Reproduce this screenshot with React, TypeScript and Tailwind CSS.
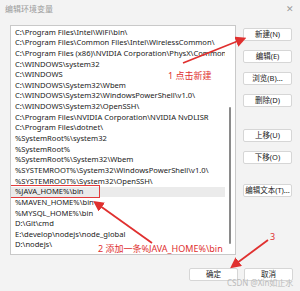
const paths = [
  'C:\\Program Files\\Intel\\WiFi\\bin\\',
  'C:\\Program Files\\Common Files\\Intel\\WirelessCommon\\',
  'C:\\Program Files (x86)\\NVIDIA Corporation\\PhysX\\Common',
  'C:\\WINDOWS\\system32',
  'C:\\WINDOWS',
  'C:\\WINDOWS\\System32\\Wbem',
  'C:\\WINDOWS\\System32\\WindowsPowerShell\\v1.0\\',
  'C:\\WINDOWS\\System32\\OpenSSH\\',
  'C:\\Program Files\\NVIDIA Corporation\\NVIDIA NvDLISR',
  'C:\\Program Files\\dotnet\\',
  '%SystemRoot%\\system32',
  '%SystemRoot%',
  '%SystemRoot%\\System32\\Wbem',
  '%SYSTEMROOT%\\System32\\WindowsPowerShell\\v1.0\\',
  '%SYSTEMROOT%\\System32\\OpenSSH\\',
  '%JAVA_HOME%\\bin',
  '%MAVEN_HOME%\\bin',
  '%MYSQL_HOME%\\bin',
  'D:\\Git\\cmd',
  'E:\\develop\\nodejs\\node_global',
  'D:\\nodejs\\',
];

const sideButtons = [
  { label: '新建(N)', mt: 'mt-[3px]' },
  { label: '编辑(E)', mt: 'mt-[9px]' },
  { label: '浏览(B)...', mt: 'mt-[9px]' },
  { label: '删除(D)', mt: 'mt-[9px]' },
  { label: '上移(U)', mt: 'mt-[22px]' },
  { label: '下移(O)', mt: 'mt-[9px]' },
  { label: '编辑文本(T)...', mt: 'mt-[20px]' },
];

const Btn = ({ label, className = '' }: { label: string; className?: string }) => (
  <div
    className={`h-[13px] w-[49px] flex items-center justify-center bg-white border border-[#d6d6d6] rounded-[2px] text-[7.5px] text-[#222] ${className}`}
  >
    {label}
  </div>
);

export default function App() {
  return (
    <div
      className="relative w-[300px] h-[291px] overflow-hidden bg-[#f3f3f3]"
      style={{ fontFamily: '"Noto Sans", "Noto Sans CJK SC", sans-serif' }}
    >
      <div className="flex items-center justify-between h-[17px] pl-[5px] pr-[6px]">
        <span className="text-[8px] text-[#9a9a9a]">编辑环境变量</span>
        <span className="text-[9px] text-[#9a9a9a] leading-none">✕</span>
      </div>

      <div className="flex mt-[8px]">
        <div className="ml-[10px] w-[226px] h-[230px] bg-white border border-[#c9c9c9] flex">
          <div className="flex-1 pt-[1px] overflow-hidden">
            {paths.map((p, i) => (
              <div
                key={i}
                className={`h-[10.65px] flex items-center pl-[4px] text-[7.6px] text-[#1a1a1a] whitespace-nowrap ${
                  i === 15 ? 'bg-[#ebebeb]' : ''
                }`}
              >
                <span
                  className={i === 15 ? 'outline outline-[1px] outline-[#e23b3b] -ml-[4px] pl-[4px] pr-[1px] w-[88px] h-[11px] flex items-center' : ''}
                >
                  {p}
                </span>
              </div>
            ))}
          </div>
          <div className="w-[10px] flex justify-center pt-[81px]">
            <div className="w-[2px] h-[137px] bg-[#8a8a8a] rounded-full" />
          </div>
        </div>

        <div className="ml-[7px] flex flex-col">
          {sideButtons.map((b) => (
            <Btn key={b.label} label={b.label} className={b.mt} />
          ))}
        </div>
      </div>

      <div className="flex justify-end gap-[6px] pr-[7px] mt-[13px]">
        <Btn label="确定" />
        <Btn label="取消" />
      </div>

      <div className="absolute left-[227px] top-[277px] text-[8px] text-[#b5b5b5] opacity-90 whitespace-nowrap">
        CSDN @Xin如止水
      </div>

      <div className="absolute left-[168px] top-[69px] text-[9px] text-[#e0302f] whitespace-nowrap">
        1 点击新建
      </div>
      <div className="absolute left-[98px] top-[242px] text-[9px] text-[#e0302f] whitespace-nowrap">
        2 添加一条%JAVA_HOME%\bin
      </div>
      <div className="absolute left-[270px] top-[230px] text-[9px] text-[#e0302f]">3</div>

      <svg className="absolute inset-0 pointer-events-none" width="300" height="291">
        <defs>
          <marker id="ah" markerWidth="6" markerHeight="6" refX="4" refY="3" orient="auto" markerUnits="strokeWidth">
            <path d="M0,0 L6,3 L0,6 z" fill="#e0302f" />
          </marker>
        </defs>
        <line x1="183" y1="63" x2="243" y2="39" stroke="#e0302f" strokeWidth="1.8" markerEnd="url(#ah)" />
        <line x1="152" y1="243" x2="96" y2="203" stroke="#e0302f" strokeWidth="1.8" markerEnd="url(#ah)" />
        <line x1="268" y1="240" x2="233" y2="266" stroke="#e0302f" strokeWidth="1.8" markerEnd="url(#ah)" />
      </svg>
    </div>
  );
}
